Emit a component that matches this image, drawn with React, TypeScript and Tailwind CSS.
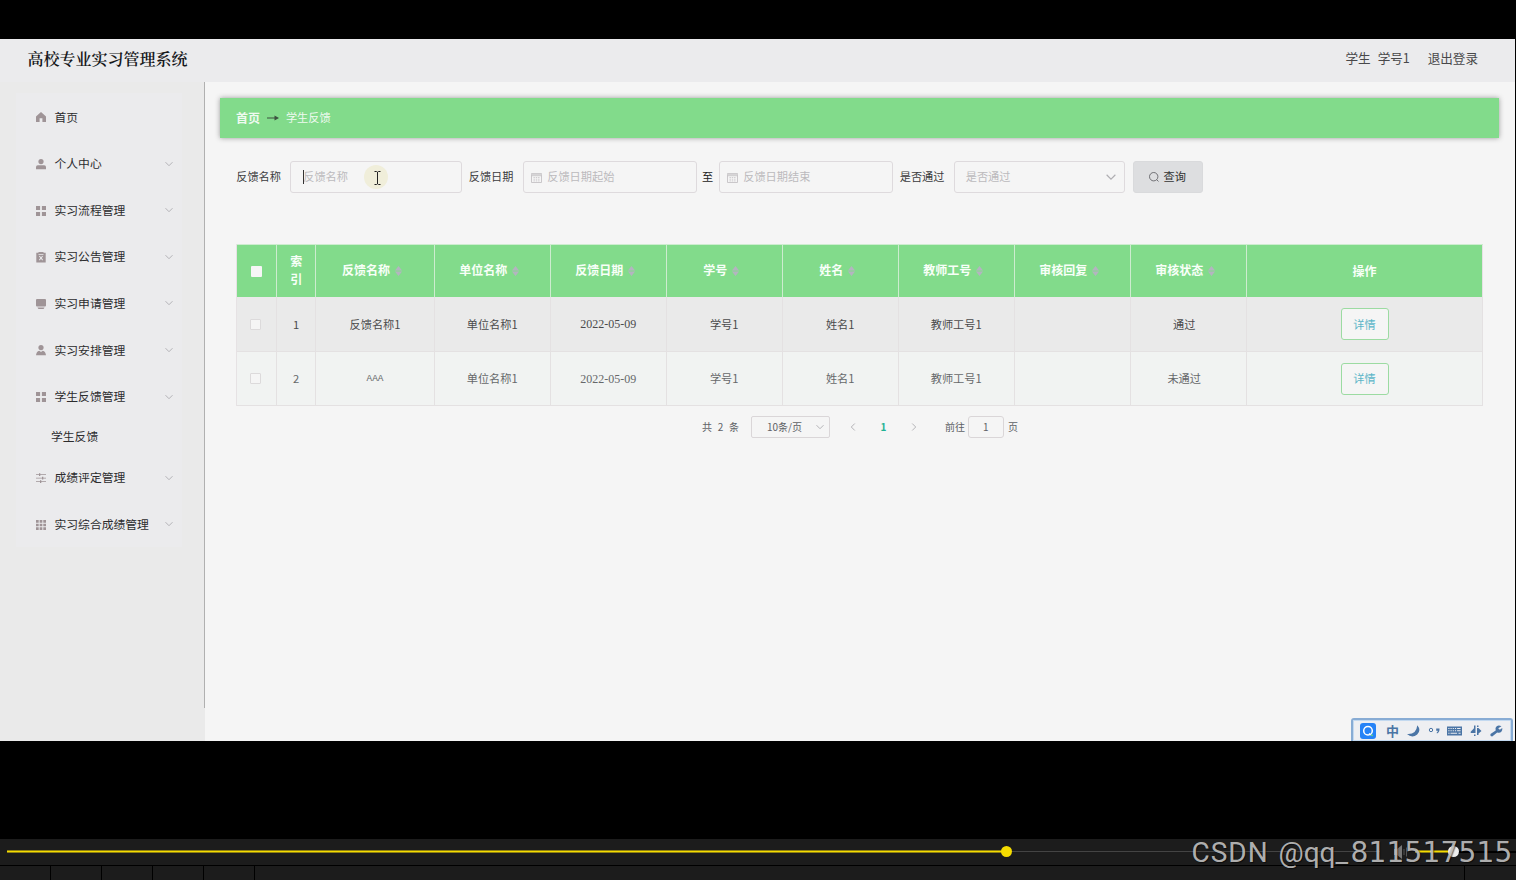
import type { ReactNode } from "react";
import clsx from "clsx";

type IconName = "home" | "user" | "grid" | "clipboard" | "screen" | "person" | "sliders" | "grid9";

const MENU: { label: string; icon: IconName; children?: string[] }[] = [
  { label: "首页", icon: "home" },
  { label: "个人中心", icon: "user" },
  { label: "实习流程管理", icon: "grid" },
  { label: "实习公告管理", icon: "clipboard" },
  { label: "实习申请管理", icon: "screen" },
  { label: "实习安排管理", icon: "person" },
  { label: "学生反馈管理", icon: "grid", children: ["学生反馈"] },
  { label: "成绩评定管理", icon: "sliders" },
  { label: "实习综合成绩管理", icon: "grid9" },
];

const COLUMNS = ["反馈名称", "单位名称", "反馈日期", "学号", "姓名", "教师工号", "审核回复", "审核状态"];

const ROWS = [
  ["反馈名称1", "单位名称1", "2022-05-09", "学号1", "姓名1", "教师工号1", "", "通过"],
  ["AAA", "单位名称1", "2022-05-09", "学号1", "姓名1", "教师工号1", "", "未通过"],
];

const TABLE_GRID = "grid grid-cols-[39.5px_39.5px_118.3px_repeat(7,116px)_1fr]";

const ICONS: Record<IconName, ReactNode> = {
  home: <path d="M5 0 0 4.4V10h3.6V6.3h2.8V10H10V4.4z" />,
  user: (
    <>
      <circle cx="5" cy="2.6" r="2.6" />
      <path d="M0 10.300V8Q0 6.200 1.800 6.200h6.4Q10 6.200 10 8v2.300z" />
    </>
  ),
  grid: <path d="M0 0h4.1v4.1H0zM5.9 0H10v4.1H5.9zM0 5.9h4.1V10H0zM5.9 5.9H10V10H5.9z" />,
  clipboard: (
    <path
      fillRule="evenodd"
      d="M.3.800H2.500V0h5v.8h2.200v9.700H.3zM2.500 2v.7h5V2zM3 4.3l1.3 1.6L3 7.8l.7.6L5 6.8l1.3 1.6.7-.6-1.3-1.9L7 4.3l-.7-.5L5 5.2 3.7 3.8z"
    />
  ),
  screen: <path d="M1 0h8q1 0 1 1v5.600q0 1-1 1H1Q0 7.600 0 6.600V1Q0 0 1 0zM1.500 8.400h7Q8 10 7 10H3Q2 10 1.500 8.400z" />,
  person: (
    <>
      <circle cx="5" cy="2.6" r="2.6" />
      <path d="M0 10.300Q.3 6.500 3.300 5.700L5 7l1.700-1.300Q9.700 6.500 10 10.300z" />
    </>
  ),
  sliders: <path d="M0 1.200h3V.2h1.300v1H10V2H4.300v1H3V2H0zM0 4.700h6v-1h1.300v1H10v.8H7.300v1H6v-1H0zM0 8.300h4v-1h1.300v1H10v.8H5.300v1H4v-1H0z" />,
  grid9: <path d="M0 0h2.700v2.700H0zM3.650 0h2.700v2.700h-2.700zM7.300 0H10v2.700H7.300zM0 3.650h2.700v2.700H0zM3.650 3.650h2.700v2.700h-2.700zM7.300 3.650H10v2.700H7.300zM0 7.300h2.700V10H0zM3.650 7.300h2.700V10h-2.700zM7.300 7.300H10V10H7.300z" />,
};

function MenuIcon({ name }: { name: IconName }) {
  return (
    <svg viewBox="0 0 10 10" className="mt-[1.500px] size-2.5 overflow-visible fill-[#9f9497]">
      {ICONS[name]}
    </svg>
  );
}

function Chevron({ className }: { className?: string }) {
  return (
    <svg viewBox="0 0 8 8" className={clsx("fill-none stroke-[#aeadb1]", className)}>
      <path d="M.5 2.200 4 5.700 7.500 2.200" strokeWidth="0.9" />
    </svg>
  );
}

function SortCaret() {
  return (
    <svg viewBox="0 0 7 10" className="mt-0.5 ml-[5px] h-2.5 w-[7px] shrink-0 fill-[#b4b4c0]">
      <path d="M0 4.500 3.500 0 7 4.500zM0 5.500h7L3.500 10z" />
    </svg>
  );
}

function Header() {
  return (
    <header className="flex h-[43px] shrink-0 items-center justify-between bg-[#ebebed] pr-[37px] pb-1 pl-[27.5px]">
      <h1 className="text-[16px] leading-none font-semibold text-[#16171a] font-['Noto_Serif_CJK_SC','Liberation_Serif','Noto_Sans_CJK_SC',serif]">
        高校专业实习管理系统
      </h1>
      <div className="flex text-[12.6px] leading-none whitespace-pre text-[#48484a]">
        <span className="mr-[7px]">学生</span>
        <span className="w-[50px]">学号1</span>
        <span>退出登录</span>
      </div>
    </header>
  );
}

function Sidebar() {
  return (
    <aside className="flex w-[205px] shrink-0 items-start bg-[#eaeaea]">
      <nav className="mt-[11.300px] ml-4 w-[166px] bg-[#ebebed] text-[11.8px] leading-none text-[#2c2c2e]">
        {MENU.map((item, i) => (
          <div key={item.label}>
            <div className="flex h-[46.6px] items-center pr-[9px] pl-5">
              <MenuIcon name={item.icon} />
              <span className="ml-[8.500px] flex-1">{item.label}</span>
              {i > 0 && <Chevron className="mt-px size-2" />}
            </div>
            {item.children?.map((child) => (
              <div key={child} className="flex h-[34.6px] items-center pb-0.5 pl-[35px]">
                {child}
              </div>
            ))}
          </div>
        ))}
      </nav>
      <div className="ml-auto h-[626px] w-[1.5px] bg-[#b0b0b0]" />
    </aside>
  );
}

function CalendarIcon() {
  return (
    <svg viewBox="0 0 11 11" className="mr-[5px] size-[11px] fill-none stroke-[#c5c2c5]">
      <path d="M.5 1.500h10v9H.5zM.5 3.700h10" strokeWidth=".9" />
      <path d="M2.500 5.500h6M2.500 7.200h6M2.500 8.900h6" strokeWidth=".8" strokeDasharray="1.400 .900" />
      <path d="M.5 2.500h10" strokeWidth="1.500" className="stroke-[#d6d4d6]" />
    </svg>
  );
}

function Field({ className, children }: { className?: string; children: ReactNode }) {
  return (
    <div className={clsx("flex h-[31.500px] items-center rounded-[3px] border border-[#dedadd] text-[#bcbabd]", className)}>
      {children}
    </div>
  );
}

function FilterBar() {
  return (
    <div className="mt-[23.500px] flex h-8 items-center pl-[15.800px] text-[11.2px] leading-none text-[#3c3c3e]">
      <span className="w-[54px]">反馈名称</span>
      <Field className="relative w-[171.500px] pl-3">
        <span className="absolute left-3 h-3.5 w-px bg-[#333]" />
        <span>反馈名称</span>
        {/* mouse pointer highlight */}
        <span className="absolute top-[3px] left-[73px] flex size-6 items-center justify-center rounded-full bg-[#f0eeda]">
          <svg viewBox="0 0 7 14" className="mt-0.5 ml-0.5 h-[14px] w-[7px] fill-none stroke-[#222]">
            <path d="M.5.500h2l1 .7 1-.7h2M3.500 1v12M.5 13.500h2l1-.7 1 .7h2" />
          </svg>
        </span>
      </Field>
      <span className="ml-[7px] w-[54px]">反馈日期</span>
      <Field className="w-[174px] pl-[7.500px]">
        <CalendarIcon />
        反馈日期起始
      </Field>
      <span className="w-[22px] text-center text-[#222]">至</span>
      <Field className="w-[174px] pl-[7.500px]">
        <CalendarIcon />
        反馈日期结束
      </Field>
      <span className="ml-[7px] w-[54px]">是否通过</span>
      <Field className="w-[171.500px] justify-between pr-2 pl-[11px]">
        是否通过
        <Chevron className="size-2.5" />
      </Field>
      <button className="ml-[7.500px] flex h-[31.500px] w-[70px] items-center justify-center gap-1 rounded-[3px] border border-[#d9dadc] bg-[#dddee0] text-[#333]">
        <svg viewBox="0 0 10 10" className="size-2.5 fill-none stroke-[#55565a]">
          <circle cx="4.700" cy="4.700" r="4.200" strokeWidth=".8" />
          <path d="m7.700 7.700 1.800 1.800" strokeWidth=".8" />
        </svg>
        查询
      </button>
    </div>
  );
}

function Cell({ className, children }: { className?: string; children?: ReactNode }) {
  return <div className={clsx("flex items-center justify-center border-r", className)}>{children}</div>;
}

function FeedbackTable() {
  return (
    <div className="mt-[51px] ml-[16px] w-[1247px] border-l border-[#e6e2e4] leading-none">
      <div className={clsx(TABLE_GRID, "h-[53px] border-t border-[#cdeccf] bg-[#82db8b] text-[12px] font-bold text-[#f8fff8]")}>
        <Cell className="border-[#cdeccf]">
          <span className="size-[11px] rounded-[1px] bg-[#f6f6f6]" />
        </Cell>
        <Cell className="border-[#cdeccf] px-3 pb-0.5 text-center leading-[18px]">索引</Cell>
        {COLUMNS.map((name) => (
          <Cell key={name} className="border-[#cdeccf] pr-1.5 pb-[3px]">
            {name}
            <SortCaret />
          </Cell>
        ))}
        <Cell className="border-[#e6e2e4] pb-px">操作</Cell>
      </div>
      {ROWS.map((row, i) => (
        <div
          key={i}
          className={clsx(
            TABLE_GRID,
            "h-[54.500px] border-b border-[#e4e1e2] text-[11.2px]",
            i === 0 ? "bg-[#eaeaea] text-[#4a4a4c]" : "bg-[#f1f3f2] text-[#66686a]",
          )}
        >
          <Cell className="border-[#e4e1e2] pt-px pr-0.5">
            <span className="size-[11px] rounded-[1px] border border-[#dcdadb] bg-[#f5f5f5]" />
          </Cell>
          <Cell className="border-[#e4e1e2] pt-px">{i + 1}</Cell>
          {row.map((value, j) => (
            <Cell
              key={j}
              className={clsx(
                "border-[#e4e1e2] pt-px",
                j === 2 && "font-['Liberation_Serif',serif] text-[12px]",
                value === "AAA" && "font-['Liberation_Mono',monospace] text-[9.4px]",
                j === 7 && "pr-2",
              )}
            >
              {value}
            </Cell>
          ))}
          <Cell className="border-[#e4e1e2] pt-px">
            <button className="h-8 w-12 rounded-[3px] border border-[#9cdba2] bg-[#f5f5f5] text-[#5cb6c8]">详情</button>
          </Cell>
        </div>
      ))}
    </div>
  );
}

function Pagination() {
  return (
    <div className="mt-[9.500px] flex h-[22px] items-center pl-[481.500px] text-[10px] leading-none text-[#606266]">
      <span className="w-[49px] [word-spacing:3.500px]">共 2 条</span>
      <div className="flex h-[22px] w-[79px] items-center justify-between rounded-[2px] border border-[#dad6d8] pr-[5px] pl-[15px] text-[10px]">
        10条/页
        <Chevron className="size-2" />
      </div>
      <Chevron className="ml-[19px] size-2 rotate-90" />
      <span className="w-[53px] text-center font-bold text-[#1fb294]">1</span>
      <Chevron className="size-2 -rotate-90" />
      <span className="ml-[27px] w-[23px]">前往</span>
      <span className="flex h-[22px] w-[36px] items-center justify-center rounded-[3px] border border-[#dad6d8]">1</span>
      <span className="ml-1">页</span>
    </div>
  );
}

function ImeBar() {
  return (
    <div className="absolute right-0.5 bottom-0 flex h-[23px] w-[162px] items-center rounded-t-[3px] border-[2px] border-b-0 border-[#88acd4] bg-[#eeeff2] pl-[7px] shadow-[inset_0_0_0_1px_#c3d9f0]">
      <span className="relative flex size-4 shrink-0 items-center justify-center rounded-[3px] bg-[#2683f7]">
        <svg viewBox="0 0 12 12" className="size-3 fill-none stroke-white">
          <circle cx="6" cy="5.700" r="4.300" strokeWidth="1.500" />
          <path d="m7 8.500 2 1.500" strokeWidth="1.300" />
          <circle cx="10" cy="10.300" r=".9" className="fill-[#6fe06a] stroke-none" />
        </svg>
      </span>
      <span className="ml-[10px] text-[13px] leading-none font-bold text-[#4b75a5]">中</span>
      <svg viewBox="0 0 102 14" className="ml-[7px] h-3.5 w-[102px] shrink-0 fill-[#4b75a5]">
        {/* moon */}
        <path d="M11.300 1.200q4.200 5-.1 9.300Q6 14.500 1 10q9.300.8 10.300-8.800z" />
        {/* punctuation */}
        <circle cx="25" cy="6" r="1.700" fill="none" stroke="#4b75a5" />
        <path d="M30.200 4.500h3.300q.3 3.500-2.500 5l-.4-.7q1.300-.8 1.200-2h-1.600z" />
        {/* keyboard */}
        <path
          fillRule="evenodd"
          d="M41 2.500h15v9H41zM42.300 4v1h1.200V4zm2.200 0v1h1.200V4zm2.200 0v1h1.200V4zm2.200 0v1h1.200V4zm2.200 0v1h3.500V4zM42.300 6.300v1h1.200v-1zm2.200 0v1h1.200v-1zm2.200 0v1h1.200v-1zm2.200 0v1h1.200v-1zm2.200 0v1h3.500v-1zM42.300 8.700v1h1.200v-1zm2.200 0v1h6.600v-1zm8 0v1h2.100v-1z"
        />
        {/* layout switch */}
        <path d="M69.500 1.500v7.500h-4.800V7.800L68 4.300V1.500zM68 10.500h1.500V12H68zM71 1.500h1.500V3H71zM71 4h1.500l3 3-3 2.500v1.500H71z" />
        {/* wrench */}
        <path d="M95.500 2.200q-2.800-1.500-4.800 0-1.900 1.500-1 4.200L84.500 10q-.5 2.500 1.700 2.500l5-4q2.800.8 4.300-1 1-1.500.8-3.500l-2.500 1.700-1.600-1.500z" />
      </svg>
    </div>
  );
}

function PlayerBar() {
  return (
    <footer className="relative mt-[98px] h-[41px] bg-[#1c1c1c]">
      <div className="flex h-[26px] items-center pb-px pl-[7px]">
        <div className="h-[3px] w-[999px] shrink-0 border-y border-[#8f8110] bg-[#f5dc00]" />
        <div className="relative z-10 -mx-[5px] size-[11px] shrink-0 rounded-full bg-[#f5dc00]" />
        <div className="h-px w-[373px] shrink-0 bg-[#444]" />
        <svg viewBox="0 0 14 14" className="ml-[14px] size-3.5 shrink-0 fill-[#777]">
          <path d="M0 4h3l5-4v14l-5-4H0z" />
          <path d="M10 4v6M12.500 2.500v9" stroke="#555" />
        </svg>
        <div className="ml-[7px] h-[3px] w-[38px] shrink-0 border-y border-[#8f8110] bg-[#f5dc00]" />
        <div className="relative -mx-[5px] size-[11px] shrink-0 rounded-full bg-[#eee]" />
        <div className="h-[2px] flex-1 bg-black" />
      </div>
      <div className="flex h-[15px] border-t border-black">
        {[0, 1, 2, 3, 4].map((n) => (
          <div key={n} className="w-[51px] border-r border-black" />
        ))}
        <div className="w-[1210px] border-r border-black" />
      </div>
      <div className="absolute top-[-1px] left-[1191.500px] flex text-[28px] leading-[30px] whitespace-nowrap text-[#c4c4c4]/90 [text-shadow:1px_1px_1px_#0008] font-['Roboto',sans-serif]">
        <span className="w-[87px] tracking-[1px]">CSDN</span>
        <span className="w-[72px]">@qq_</span>
        <span className="tracking-[0.2px] font-['DejaVu_Sans',sans-serif]">811517515</span>
      </div>
    </footer>
  );
}

export default function App() {
  return (
    <div className="h-[880px] w-[1516px] overflow-hidden bg-black pt-[39px] font-['Noto_Sans_CJK_SC',sans-serif]">
      <div className="relative flex h-[702px] w-[1515px] flex-col overflow-hidden bg-[#f5f5f5]">
        <Header />
        <div className="flex flex-1">
          <Sidebar />
          <main className="flex-1 pt-4 pl-[15.400px]">
            <div className="flex h-[39.500px] w-[1279px] items-center bg-[#82db8b] pl-[15.500px] text-[11.2px] leading-none text-[#effaf0] shadow-[0_0_5px_#999]">
              <span className="text-[12px] font-bold">首页</span>
              <svg viewBox="0 0 12 6" className="mx-[7px] h-1.5 w-3 fill-[#3c5240]">
                <path d="M0 2.500h7.500V.5L12 3 7.500 5.500V3.500H0z" />
              </svg>
              <span>学生反馈</span>
            </div>
            <FilterBar />
            <FeedbackTable />
            <Pagination />
          </main>
        </div>
        <ImeBar />
      </div>
      <PlayerBar />
    </div>
  );
}
